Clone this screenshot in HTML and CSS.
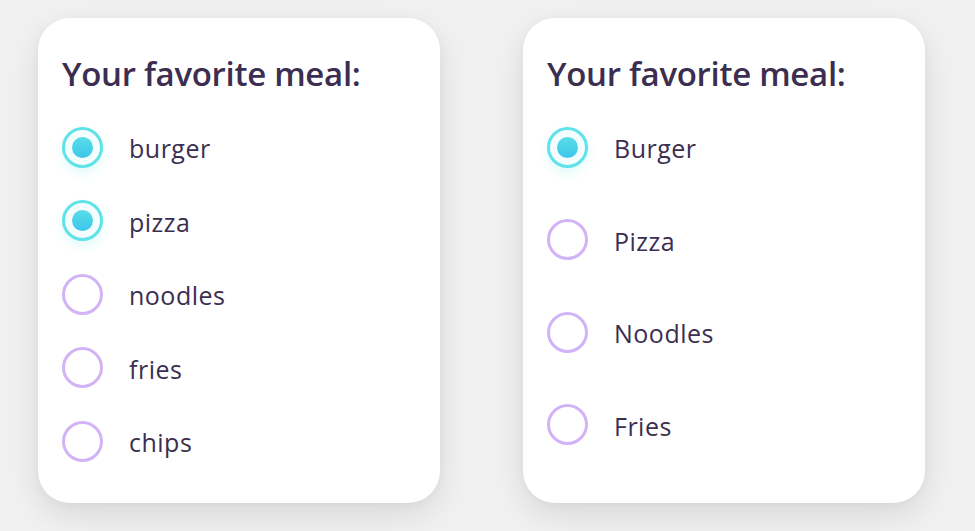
FILE: index.html
```html
<!DOCTYPE html>
<html>
<head>
<meta charset="utf-8">
<link rel="stylesheet" href="styles.css">
</head>
<body>
<main class="page">
  <section class="card card-a">
    <h2 class="title">Your favorite meal:</h2>
    <ul class="options">
      <li class="option"><span class="radio checked"></span><span class="label">burger</span></li>
      <li class="option"><span class="radio checked"></span><span class="label">pizza</span></li>
      <li class="option"><span class="radio"></span><span class="label">noodles</span></li>
      <li class="option"><span class="radio"></span><span class="label">fries</span></li>
      <li class="option"><span class="radio"></span><span class="label">chips</span></li>
    </ul>
  </section>
  <section class="card card-b">
    <h2 class="title">Your favorite meal:</h2>
    <ul class="options">
      <li class="option"><span class="radio checked"></span><span class="label">Burger</span></li>
      <li class="option"><span class="radio"></span><span class="label">Pizza</span></li>
      <li class="option"><span class="radio"></span><span class="label">Noodles</span></li>
      <li class="option"><span class="radio"></span><span class="label">Fries</span></li>
    </ul>
  </section>
</main>
</body>
</html>
```

FILE: styles.css
```css
* { box-sizing: border-box; }
html, body { margin: 0; padding: 0; }
body {
  background: #f1f1f1;
  font-family: "Open Sans", "Noto Sans", sans-serif;
  color: #3b2e50;
  width: 975px;
  height: 531px;
  overflow: hidden;
}
.page {
  display: flex;
  gap: 83px;
  padding: 18px 0 0 38px;
}
.card {
  width: 402px;
  height: 485px;
  background: #fff;
  border-radius: 32px;
  box-shadow: 0 12px 34px rgba(0,0,0,0.10), 0 2px 8px rgba(0,0,0,0.04);
  padding: 32px 24px 0 24px;
}
.title {
  margin: 0;
  font-size: 33px;
  line-height: 48px;
  font-weight: 600;
  letter-spacing: -0.3px;
}
.options {
  list-style: none;
  margin: 29px 0 0 0;
  padding: 0;
  display: flex;
  flex-direction: column;
  gap: 33.5px;
}
.card-b .options { gap: 52.5px; }
.option {
  display: flex;
  align-items: center;
  height: 40px;
  gap: 26px;
}
.radio {
  width: 41px;
  height: 41px;
  border-radius: 50%;
  border: 3px solid #d2b4f6;
  background: #fff;
  flex: none;
  display: flex;
  align-items: center;
  justify-content: center;
}
.radio.checked {
  border-color: #5fe3e8;
  background: #f4fdfe;
  box-shadow: 0 5px 10px rgba(95,227,232,0.18);
}
.radio.checked::after {
  content: "";
  width: 21px;
  height: 21px;
  border-radius: 50%;
  background: linear-gradient(180deg, #58dde6 0%, #3cc6eb 100%);
}
.label {
  font-size: 25px;
  line-height: 34px;
  letter-spacing: 0.5px;
  padding-top: 2px;
}
```
